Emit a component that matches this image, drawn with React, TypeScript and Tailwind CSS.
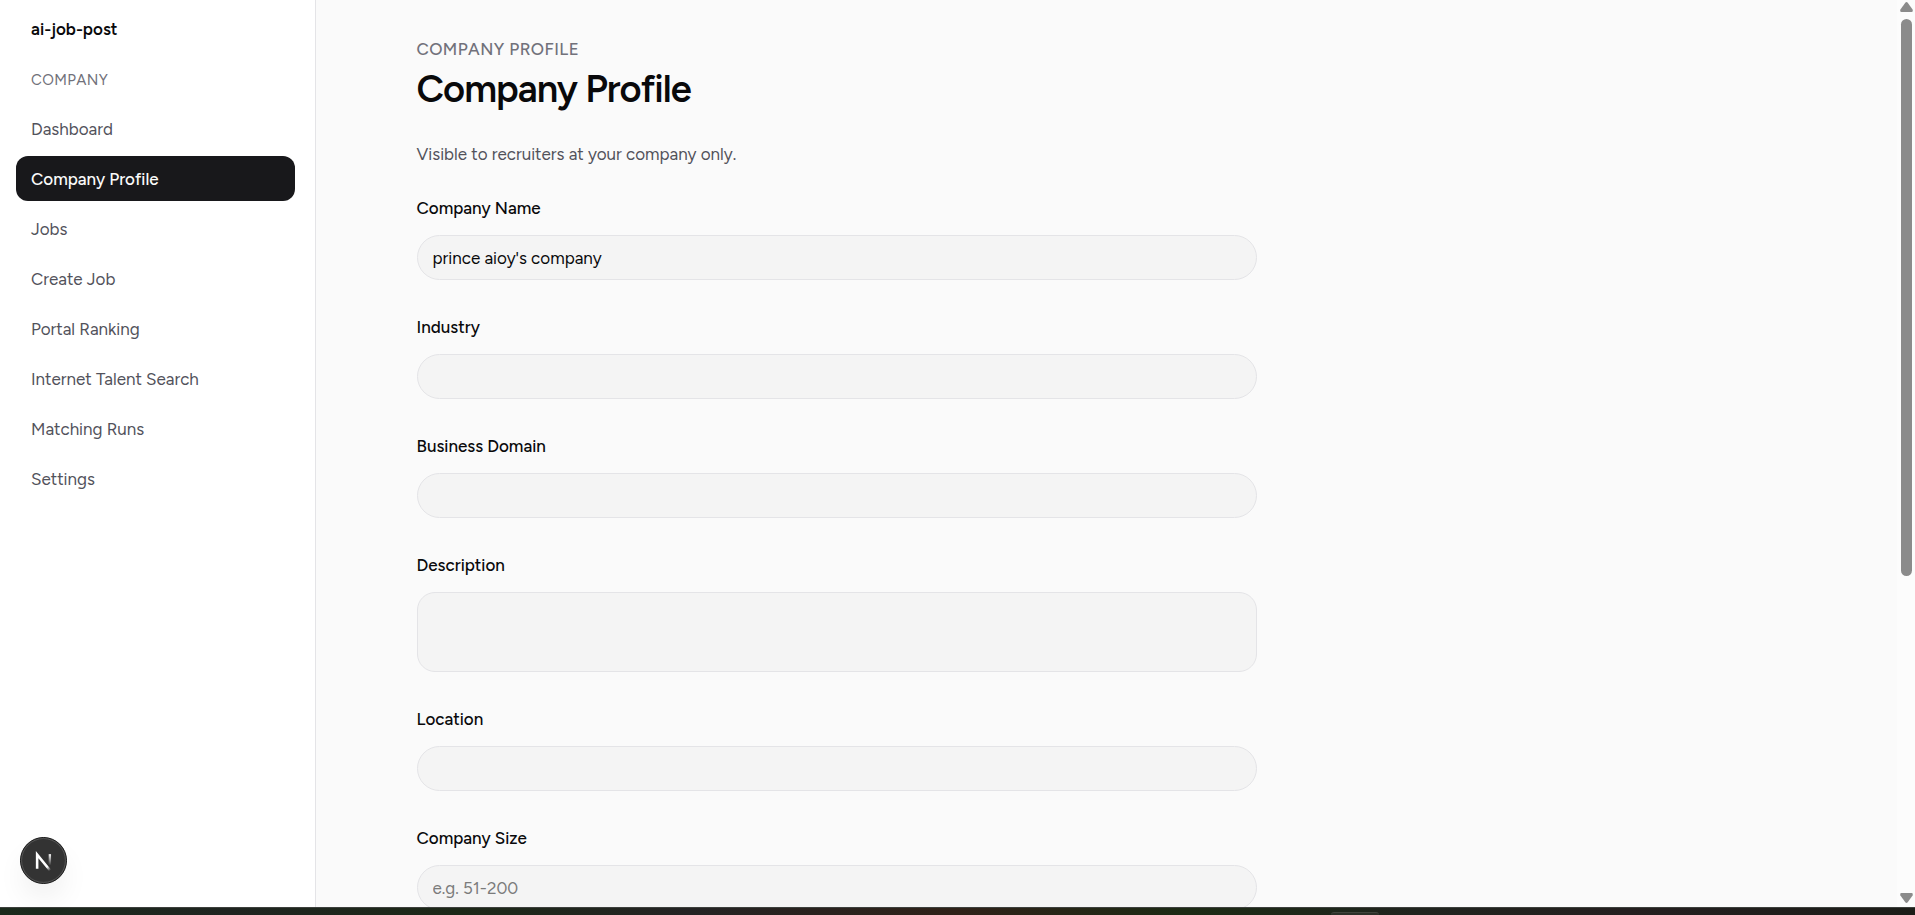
import { useState } from "react";
import clsx from "clsx";

const NAV_ITEMS = [
  "Dashboard",
  "Company Profile",
  "Jobs",
  "Create Job",
  "Portal Ranking",
  "Internet Talent Search",
  "Matching Runs",
  "Settings",
];

interface Field {
  name: string;
  label: string;
  placeholder?: string;
  multiline?: boolean;
}

const FIELDS: Field[] = [
  { name: "companyName", label: "Company Name" },
  { name: "industry", label: "Industry" },
  { name: "businessDomain", label: "Business Domain" },
  { name: "description", label: "Description", multiline: true },
  { name: "location", label: "Location" },
  { name: "companySize", label: "Company Size", placeholder: "e.g. 51-200" },
];

function Sidebar() {
  const [active, setActive] = useState("Company Profile");

  return (
    <aside className="w-79 shrink-0 border-r border-[#e4e4e7] bg-white pl-4 pr-5">
      <p className="px-[15px] pt-[17px] text-[17px] leading-[25px] font-semibold text-[#09090b]">ai-job-post</p>
      <p className="px-[15px] pt-7 text-[15px] leading-5 tracking-wide text-[#71717a]">COMPANY</p>
      <nav className="mt-4 flex flex-col gap-[5px]">
        {NAV_ITEMS.map((item) => (
          <a
            key={item}
            href="#"
            onClick={(e) => {
              e.preventDefault();
              setActive(item);
            }}
            className={clsx(
              "rounded-xl px-[15px] pt-[11px] pb-[9px] text-[17px] leading-[25px]",
              item === active ? "bg-[#18181b] font-medium text-[#fafafa]" : "text-[#52525b]"
            )}
          >
            {item}
          </a>
        ))}
      </nav>
    </aside>
  );
}

function ProfileForm() {
  const [values, setValues] = useState<Record<string, string>>({
    companyName: "prince aioy's company",
  });

  const handleChange = (name: string, value: string) => {
    setValues({ ...values, [name]: value });
  };

  return (
    <form className="mt-[29px] flex max-w-[840px] flex-col gap-[35px]">
      {FIELDS.map(({ name, label, placeholder, multiline }) => (
        <div key={name} className="flex flex-col gap-3.5">
          <label htmlFor={name} className="text-[17px] leading-[25px] font-medium text-[#09090b]">
            {label}
          </label>
          {multiline ? (
            <textarea
              id={name}
              value={values[name] || ""}
              onChange={(e) => handleChange(name, e.target.value)}
              className="h-20 w-full resize-none rounded-[18px] border border-[#e4e4e7] bg-[#f4f4f4] px-[15px] py-2.5 text-[17px] leading-[25px] text-[#09090b] outline-none"
            />
          ) : (
            <input
              id={name}
              type="text"
              placeholder={placeholder}
              value={values[name] || ""}
              onChange={(e) => handleChange(name, e.target.value)}
              className="h-[45px] w-full rounded-full border border-[#e4e4e7] bg-[#f4f4f4] px-[15px] text-[17px] text-[#09090b] outline-none placeholder:text-[#7b7b7b]"
            />
          )}
        </div>
      ))}
    </form>
  );
}

function Scrollbar() {
  return (
    <div className="flex w-[18px] shrink-0 flex-col items-center bg-[#fcfcfc] pt-0.5 pb-1" aria-hidden="true">
      <svg className="h-[10px] w-[13px] shrink-0" viewBox="0 0 13 10" fill="#8b8b8b">
        <path d="M5.3.8Q6.5-.6 7.7.8L12.6 7.6Q13.2 10 11.6 10H1.4Q-.2 10 .4 7.6Z" />
      </svg>
      <div className="mt-[7px] flex w-full flex-1 justify-center">
        <div className="h-[63.7%] w-[11px] rounded-full bg-[#8b8b8b]" />
      </div>
      <svg className="h-[10px] w-[13px] shrink-0" viewBox="0 0 13 10" fill="#8b8b8b">
        <path d="M5.3 9.2Q6.5 10.6 7.7 9.2L12.6 2.4Q13.2 0 11.6 0H1.4Q-.2 0 .4 2.4Z" />
      </svg>
    </div>
  );
}

function DevToolsButton() {
  return (
    <button
      type="button"
      aria-label="Open Next.js Dev Tools"
      className="absolute bottom-[23px] left-5 size-[47px] rounded-full shadow-[0_16px_32px_-8px_rgba(0,0,0,0.12)]"
    >
      <svg className="size-full" viewBox="0 0 48 48" fill="none">
        <circle cx="24" cy="24" r="23.5" fill="#333" stroke="#111" />
        <circle cx="24" cy="24" r="22.4" stroke="#555" />
        <path d="M17.5 32.5V18L31 34.5" stroke="url(#diagonal)" strokeWidth="2.6" />
        <path d="M30.5 17.5v12" stroke="url(#stem)" strokeWidth="2.4" />
        <defs>
          <linearGradient id="diagonal" x1="24" y1="26" x2="31" y2="34" gradientUnits="userSpaceOnUse">
            <stop stopColor="#fff" />
            <stop offset="0.55" stopColor="#fff" />
            <stop offset="1" stopColor="#fff" stopOpacity="0" />
          </linearGradient>
          <linearGradient id="stem" x1="30" y1="17" x2="30" y2="29" gradientUnits="userSpaceOnUse">
            <stop stopColor="#fff" />
            <stop offset="1" stopColor="#fff" stopOpacity="0" />
          </linearGradient>
        </defs>
      </svg>
    </button>
  );
}

export default function App() {
  return (
    <div className="flex h-screen flex-col overflow-hidden bg-[#fafafa] font-['Figtree','Lato',sans-serif]">
      <div className="relative flex min-h-0 flex-1">
        <Sidebar />
        <main className="min-w-0 flex-1 overflow-hidden">
          <div className="mx-auto max-w-[1380px] pt-[37px]">
            <p className="text-[17px] leading-[25px] font-medium tracking-wide text-[#71717a]">COMPANY PROFILE</p>
            <h1 className="mt-[3px] text-[38px] leading-[48px] font-semibold tracking-tight text-[#09090b]">
              Company Profile
            </h1>
            <p className="mt-[29px] text-[17px] leading-[25px] text-[#52525b]">
              Visible to recruiters at your company only.
            </p>
            <ProfileForm />
          </div>
        </main>
        <Scrollbar />
        <DevToolsButton />
      </div>
      <footer className="flex h-2 shrink-0 items-end border-t border-[#3d403d] bg-[linear-gradient(to_right,#1b2a1c,#1f2420_12%,#1c2817_24%,#242323_36%,#2f2118_50%,#1c2a14_62%,#20241e_74%,#241f1f_85%,#1c1d18)]">
        <div className="ml-[69.5%] h-[3px] w-12 rounded-t-sm border-t border-[#40443c] bg-[#2c3028]" />
      </footer>
    </div>
  );
}
